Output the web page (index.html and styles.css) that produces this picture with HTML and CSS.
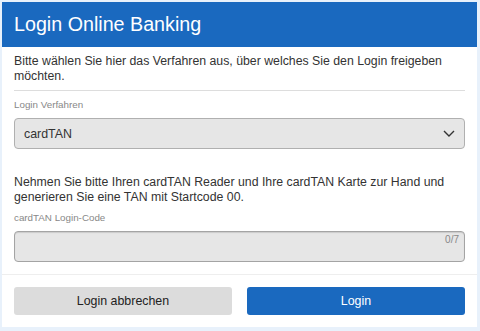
FILE: index.html
```html
<!DOCTYPE html>
<html lang="de">
<head>
  <meta charset="UTF-8" />
  <meta name="viewport" content="width=device-width, initial-scale=1.0"/>
  <title>Login Online Banking</title>
  <link rel="stylesheet" href="styles.css">
</head>
<body>
  <div class="dialog">
    <div class="header">Login Online Banking</div>

    <div class="content">
      <p class="intro">Bitte wählen Sie hier das Verfahren aus, über welches Sie den Login freigeben möchten.</p>
      <hr class="divider">

      <label class="label">Login Verfahren</label>
      <div class="select">
        <span>cardTAN</span>
        <svg width="12" height="7" viewBox="0 0 12 7"><polyline points="1,1 6,6 11,1" fill="none" stroke="#333" stroke-width="1.4"/></svg>
      </div>

      <p class="hint">Nehmen Sie bitte Ihren cardTAN Reader und Ihre cardTAN Karte zur Hand und generieren Sie eine TAN mit Startcode 00.</p>

      <label class="label label-code">cardTAN Login-Code</label>
      <div class="input-wrap">
        <input type="text" class="code-input">
        <span class="counter">0/7</span>
      </div>
    </div>

    <div class="footer">
      <button class="btn btn-cancel">Login abbrechen</button>
      <button class="btn btn-login">Login</button>
    </div>
  </div>
</body>
</html>
```

FILE: styles.css
```css
body {
  margin: 0;
  padding: 2px 3px 5px 2px;
  background-color: #e8f1fb;
  font-family: "Liberation Sans", Arial, sans-serif;
  color: #333;
}
.dialog {
  width: 475px;
  background: white;
}
.header {
  height: 45px;
  line-height: 45px;
  padding-left: 12px;
  background-color: #1a69bf;
  color: white;
  font-size: 19.7px;
}
.content {
  padding: 7px 12px 0 12px;
}
.intro, .hint {
  margin: 0;
  font-size: 12.3px;
  line-height: 15px;
}
.divider {
  margin: 6px 0 0 0;
  border: none;
  border-top: 1px solid #ddd;
}
.label {
  display: block;
  margin-top: 7px;
  font-size: 9.8px;
  line-height: 13px;
  color: #888;
}
.select {
  margin-top: 7px;
  height: 31px;
  box-sizing: border-box;
  padding: 0 9px 0 9px;
  display: flex;
  align-items: center;
  justify-content: space-between;
  background: #e6e6e6;
  border: 1px solid #b0b0b0;
  border-radius: 4px;
  font-size: 12.4px;
  color: #333;
}
.hint {
  margin-top: 26px;
}
.label-code {
  margin-top: 6px;
}
.input-wrap {
  position: relative;
  margin-top: 7px;
}
.code-input {
  display: block;
  width: 100%;
  height: 31px;
  box-sizing: border-box;
  margin: 0;
  background: #e6e6e6;
  border: 1px solid #a4a4a4;
  border-radius: 4px;
  box-shadow: inset 0 1px 1px rgba(0,0,0,0.12);
}
.counter {
  position: absolute;
  top: 3px;
  right: 6px;
  font-size: 10px;
  color: #888;
}
.footer {
  margin-top: 12px;
  border-top: 1px solid #eee;
  padding: 12px;
  display: flex;
  gap: 15px;
}
.btn {
  flex: 1;
  height: 28px;
  border: none;
  border-radius: 3px;
  font-family: "Liberation Sans", Arial, sans-serif;
  font-size: 12.4px;
  cursor: pointer;
}
.btn-cancel {
  background-color: #dcdcdc;
  color: #222;
}
.btn-login {
  background-color: #1a69bf;
  color: white;
}
```
